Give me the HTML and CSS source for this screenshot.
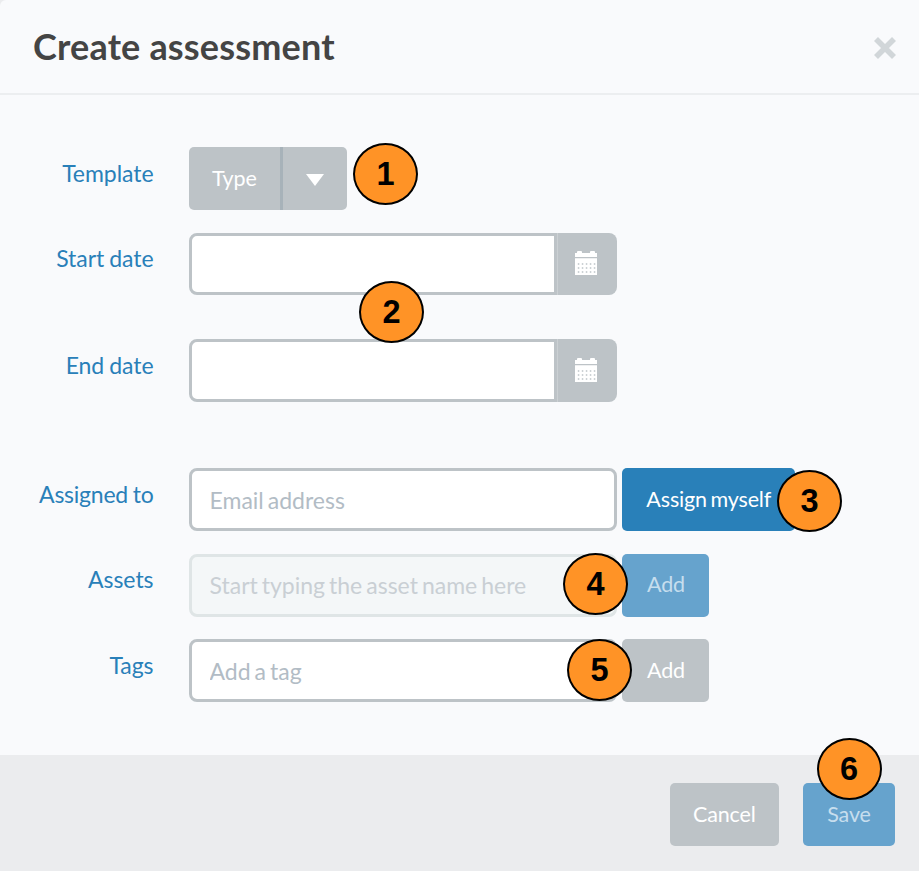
FILE: index.html
```html
<!DOCTYPE html>
<html lang="en">
<head>
<meta charset="utf-8">
<title>Create assessment</title>
<link rel="stylesheet" href="styles.css">
</head>
<body>
<svg class="defs" width="0" height="0" aria-hidden="true">
  <symbol id="calendar" viewBox="0 0 22 24">
    <path fill="#fff" d="M0 2h2V1q0-1 1-1h3q1 0 1 1v1h8V1q0-1 1-1h3q1 0 1 1v1h2v4H0zM0 7.2h22V24H0z"/>
    <path stroke="#bdc3c7" stroke-width="1.5" stroke-dasharray="1.5 2.5" d="M2.8 13h18M2.8 17h18M2.8 21h18"/>
  </symbol>
</svg>
<div class="modal">
  <header class="header">
    <h1 class="title">Create assessment</h1>
    <button class="close" aria-label="Close"><svg width="24" height="24" viewBox="0 0 24 24"><path d="M3 3l18 18M21 3L3 21"/></svg></button>
  </header>
  <form class="body">
    <div class="row row-template">
      <label class="label">Template</label>
      <div class="control split">
        <button type="button" class="btn split-main">Type</button>
        <button type="button" class="btn split-arrow" aria-label="Open"><svg width="18" height="12" viewBox="0 0 18 12"><path fill="#fff" d="M0 0h18L9 12z"/></svg></button>
        <span class="badge badge-1">1</span>
      </div>
    </div>
    <div class="row row-start">
      <label class="label">Start date</label>
      <div class="control date">
        <input class="input date-input" type="text">
        <span class="addon"><svg width="22" height="24"><use href="#calendar"/></svg></span>
        <span class="badge badge-2">2</span>
      </div>
    </div>
    <div class="row row-end">
      <label class="label">End date</label>
      <div class="control date">
        <input class="input date-input" type="text">
        <span class="addon"><svg width="22" height="24"><use href="#calendar"/></svg></span>
      </div>
    </div>
    <div class="row row-assigned">
      <label class="label label-tight">Assigned to</label>
      <div class="control">
        <input class="input" type="text" placeholder="Email address">
        <button type="button" class="btn primary assign">Assign myself</button>
        <span class="badge badge-3">3</span>
      </div>
    </div>
    <div class="row row-assets">
      <label class="label">Assets</label>
      <div class="control">
        <input class="input disabled" type="text" placeholder="Start typing the asset name here" disabled>
        <button type="button" class="btn muted add">Add</button>
        <span class="badge badge-4">4</span>
      </div>
    </div>
    <div class="row">
      <label class="label">Tags</label>
      <div class="control">
        <input class="input" type="text" placeholder="Add a tag">
        <button type="button" class="btn add">Add</button>
        <span class="badge badge-5">5</span>
      </div>
    </div>
  </form>
  <footer class="footer">
    <button class="btn cancel">Cancel</button>
    <div class="control">
      <button class="btn muted save">Save</button>
      <span class="badge badge-6">6</span>
    </div>
  </footer>
</div>
</body>
</html>
```
FILE: styles.css
```css
* { box-sizing: border-box; }
body {
  margin: 0;
  background: #ebecee;
  font-family: Lato, "Liberation Sans", sans-serif;
  overflow: hidden;
}
button, input { font-family: inherit; margin: 0; }
.defs { display: block; height: 0; }
.modal {
  display: flex;
  flex-direction: column;
  height: 871px;
  background: #f9fafc;
  border-top-left-radius: 6px;
  overflow: hidden;
}
.header {
  display: flex;
  justify-content: space-between;
  align-items: center;
  height: 95px;
  padding: 0 22.5px 0 33px;
  border-bottom: 2px solid #eceef0;
}
.title {
  margin: 0 0 2px;
  font-size: 36px;
  font-weight: 700;
  letter-spacing: 0.18px;
  line-height: 44px;
  color: #444;
}
.close {
  display: flex;
  padding: 0;
  border: 0;
  background: none;
  margin-top: 3px;
}
.close svg { fill: none; stroke: #d1d6d9; stroke-width: 5.6; }
.body { flex: 1; padding-top: 52px; }
.row {
  display: flex;
  align-items: flex-start;
  gap: 35px;
  height: 63px;
}
.row-template { margin-bottom: 22.6px; }
.row-start { margin-bottom: 43.8px; }
.row-end { margin-bottom: 65.6px; }
.row-assigned { margin-bottom: 22.6px; }
.row-assets { margin-bottom: 22.6px; }
.label {
  width: 153.5px;
  padding-top: 11.8px;
  text-align: right;
  font-size: 23px;
  line-height: 28px;
  letter-spacing: -0.05px;
  word-spacing: -0.8px;
  color: #2980b9;
}
.row-start .label, .row-assets .label { padding-top: 11.3px; }
.label-tight { letter-spacing: -0.25px; }
.control { position: relative; display: flex; gap: 5px; }
.split, .date { gap: 0; }
.btn {
  display: flex;
  align-items: center;
  justify-content: center;
  height: 63px;
  padding: 0 0 2px;
  border: 0;
  border-radius: 5px;
  background: #bdc3c7;
  color: #fff;
  font-size: 21.5px;
  letter-spacing: -0.15px;
  word-spacing: -1.8px;
}
.primary { background: #2980b9; }
.muted { background: #66a3cd; color: #c6deee; }
.split-main { width: 91.5px; border-radius: 5px 0 0 5px; }
.split-arrow {
  width: 67px;
  border-left: 3px solid #a7b2b9;
  border-radius: 0 5px 5px 0;
}
.split-arrow svg { margin: 4px 1px 0 0; }
.input {
  width: 428.5px;
  height: 63px;
  padding: 1px 18px 0;
  border: 3px solid #bdc3c7;
  border-radius: 8px;
  background: #fff;
  font-size: 23px;
  word-spacing: -1.9px;
  color: #34495e;
}
.input::placeholder { color: #b2bcc5; opacity: 1; }
.disabled { padding-top: 0; background: #f4f7f8; border-color: #dfe5e6; }
.disabled::placeholder { color: #c9cfd4; }
.date-input { width: 368.5px; height: 62.5px; border-radius: 8px 0 0 8px; }
.addon {
  display: flex;
  align-items: center;
  justify-content: center;
  width: 60.4px;
  height: 62.5px;
  padding: 0 3px 1px 0;
  border-left: 1px solid #cbd0d3;
  border-radius: 0 8px 8px 0;
  background: #bdc3c7;
}
.assign { width: 172.5px; padding: 0 0 0 1px; }
.add { width: 87px; padding-left: 1px; }
.footer {
  display: flex;
  justify-content: flex-end;
  align-items: flex-start;
  gap: 24px;
  height: 116.5px;
  padding: 28.5px 24px 0 0;
  background: #ebecee;
}
.cancel { width: 109.5px; }
.save { width: 92px; }
.badge {
  position: absolute;
  z-index: 1;
  display: flex;
  align-items: center;
  justify-content: center;
  width: 65px;
  height: 62px;
  border: 2px solid #000;
  border-radius: 50%;
  background: #ff9326;
  color: #000;
  font: bold 32.5px/1 "Liberation Sans", sans-serif;
}
.badge-1 { left: 164.5px; top: -4px; }
.badge-2 { left: 170.5px; top: 48.4px; }
.badge-3 { left: 588.5px; top: 2px; }
.badge-4 { left: 374.5px; top: -0.6px; }
.badge-5 { left: 378.5px; top: -0.2px; }
.badge-6 { left: 13.5px; top: -45px; }
```
